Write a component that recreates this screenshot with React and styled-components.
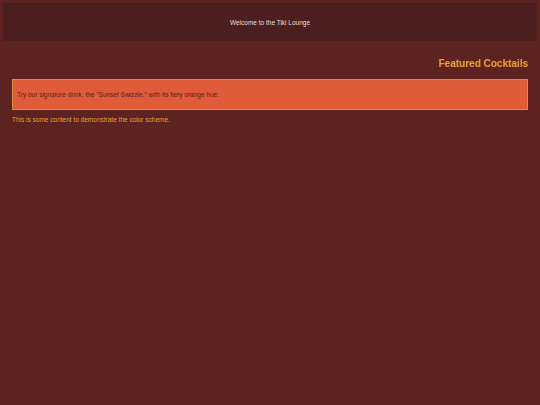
import React from "react";
import styled, { createGlobalStyle } from "styled-components";

const Global = createGlobalStyle`
  html, body { margin: 0; padding: 0; }
  body {
    background: #5c2320;
    font-family: "Liberation Sans", Arial, sans-serif;
    min-height: 405px;
  }
`;

const Page = styled.div`
  padding: 3px;
  display: flex;
  flex-direction: column;
`;

const Header = styled.header`
  height: 38px;
  background: #4a1f1e;
  color: #f2dcd4;
  font-size: 6.5px;
  display: flex;
  align-items: center;
  justify-content: center;
`;

const Main = styled.main`
  padding: 0 9px;
  display: flex;
  flex-direction: column;
`;

const Title = styled.h2`
  margin: 16px 0 0;
  text-align: right;
  font-size: 10px;
  font-weight: bold;
  color: #e3a233;
  line-height: 13px;
`;

const Feature = styled.div`
  margin-top: 9px;
  height: 29px;
  background: #e05b38;
  border: 1.5px solid #e38c33;
  color: #5e1f1c;
  font-size: 6.5px;
  display: flex;
  align-items: center;
  padding: 0 4px;
`;

const Text = styled.p`
  margin: 6px 0 0;
  font-size: 6.5px;
  color: #e3a233;
`;

export default function App() {
  return (
    <>
      <Global />
      <Page>
        <Header>Welcome to the Tiki Lounge</Header>
        <Main>
          <Title>Featured Cocktails</Title>
          <Feature>Try our signature drink, the "Sunset Swizzle," with its fiery orange hue.</Feature>
          <Text>This is some content to demonstrate the color scheme.</Text>
        </Main>
      </Page>
    </>
  );
}
